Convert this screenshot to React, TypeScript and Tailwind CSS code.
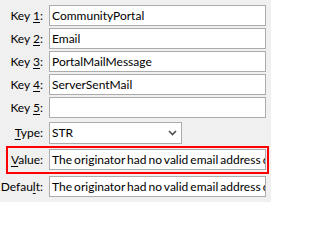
import React from 'react';

const keys = [
  { n: '1', value: 'CommunityPortal' },
  { n: '2', value: 'Email' },
  { n: '3', value: 'PortalMailMessage' },
  { n: '4', value: 'ServerSentMail' },
  { n: '5', value: '' }
];

const message = 'The originator had no valid email address defined';

const Field: React.FC<{ value: string }> = ({ value }) => (
  <div className="w-[217px] h-[21px] border border-[#acacac] bg-white pl-[2px] overflow-hidden whitespace-nowrap leading-[19px] [word-spacing:-1px]">
    {value}
  </div>
);

const Label: React.FC<{ before: string; hot: string; after: string; className?: string }> = ({ before, hot, after, className }) => (
  <span className={`text-right pr-[6px] ${className ?? 'w-[49px]'}`}>
    {before}
    <span className="underline underline-offset-2">{hot}</span>
    {after}
  </span>
);

export default function App() {
  return (
    <div
      className="w-[271px] h-[202px] bg-[#f0f0f0] text-[12px] text-black pt-[5px] flex flex-col"
      style={{ fontFamily: 'Lato, "Liberation Sans", sans-serif' }}
    >
      <div className="flex flex-col gap-[2px]">
        {keys.map(({ n, value }) => (
          <div key={n} className="flex items-center">
            <Label before="Key " hot={n} after=":" />
            <Field value={value} />
          </div>
        ))}
      </div>

      <div className="flex items-center mt-[4px]">
        <Label before="" hot="T" after="ype:" />
        <div className="w-[133px] h-[22px] border border-[#acacac] bg-white pl-[2px] flex items-center justify-between leading-[20px]">
          <span>STR</span>
          <svg width="9" height="6" viewBox="0 0 9 6" className="mr-[4px]">
            <path d="M1 1l3.5 3.5L8 1" fill="none" stroke="#505050" strokeWidth="1.6" />
          </svg>
        </div>
      </div>

      <div className="ml-[6px] mt-[2px] w-[263px] h-[28px] border-2 border-[#ff0000] flex items-center pb-[1px]">
        <Label before="" hot="V" after="alue:" className="w-[41px]" />
        <Field value={message} />
      </div>

      <div className="flex items-center mt-[2px]">
        <Label before="Defau" hot="l" after="t:" />
        <Field value={message} />
      </div>
    </div>
  );
}
